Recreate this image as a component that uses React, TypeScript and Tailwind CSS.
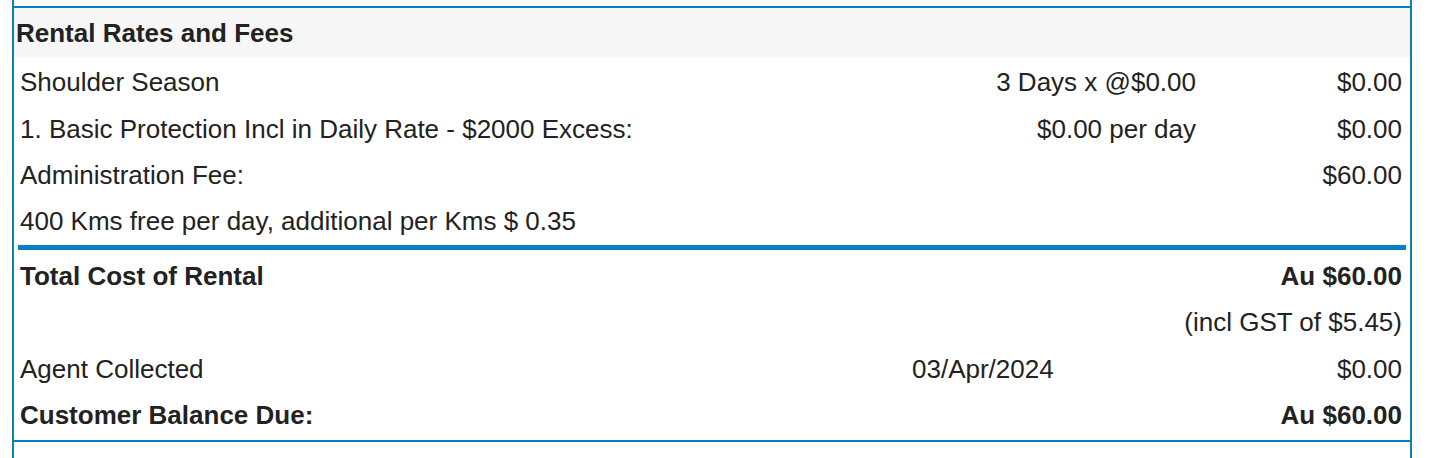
import React from "react";

const font = { fontFamily: '"Liberation Sans", Arial, Helvetica, sans-serif' };

function Row({ left, mid, right, bold, midLeft }: { left?: string; mid?: string; right?: string; bold?: boolean; midLeft?: boolean }) {
  return (
    <div className={`flex items-center h-[46.4px] pl-[6px] pt-[2px] ${bold ? "font-bold" : ""}`}>
      <div className="flex-1 whitespace-nowrap">{left}</div>
      {midLeft ? (
        <div className="w-[300px] whitespace-nowrap pl-[8px]">{mid}</div>
      ) : (
        <div className="w-[300px] whitespace-nowrap text-right pr-[8px]">{mid}</div>
      )}
      <div className="min-w-[206px] shrink-0 text-right pr-[8px] whitespace-nowrap">{right}</div>
    </div>
  );
}

export default function App() {
  return (
    <div className="w-[1434px] h-[458px] overflow-hidden bg-white pl-[12px] pr-[22px] text-[26px] leading-none text-[#222222]" style={font}>
      <div className="h-full border-x-2 border-[#0a7fc2]">
        <div className="h-[6px]" />
        <div className="h-[2px] bg-[#0a7fc2]" />
        <div className="h-[49px] bg-[#f6f6f6] flex items-center pl-[2px] pt-[1px] font-bold">Rental Rates and Fees</div>
        <div className="pt-[1px]">
          <Row left="Shoulder Season" mid="3 Days x @$0.00" right="$0.00" />
          <Row left="1. Basic Protection Incl in Daily Rate - $2000 Excess:" mid="$0.00 per day" right="$0.00" />
          <Row left="Administration Fee:" right="$60.00" />
          <Row left="400 Kms free per day, additional per Kms $ 0.35" />
        </div>
        <div className="mx-[4px] mt-[1px] h-[5px] bg-[#0a7fc2]" />
        <div className="pt-[2px]">
          <Row left="Total Cost of Rental" right="Au $60.00" bold />
          <Row right="(incl GST of $5.45)" />
          <Row left="Agent Collected" mid="03/Apr/2024" right="$0.00" midLeft />
          <Row left="Customer Balance Due:" right="Au $60.00" bold />
        </div>
        <div className="mt-[3px] h-[2px] bg-[#0a7fc2]" />
      </div>
    </div>
  );
}
